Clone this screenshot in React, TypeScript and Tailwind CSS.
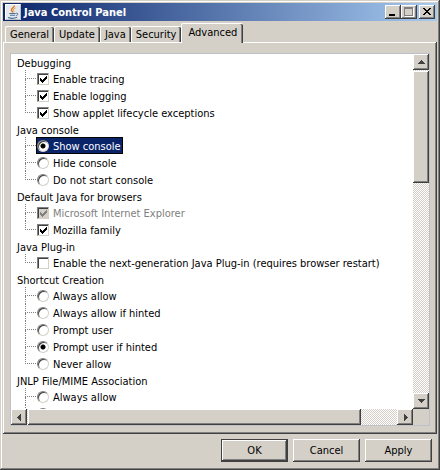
import type { ReactNode } from "react"
import clsx from "clsx"

type Item = {
  label: string
  checked?: boolean
  disabled?: boolean
  selected?: boolean
}

type Group = {
  title: string
  type: "checkbox" | "radio"
  items: Item[]
}

const tabs = ["General", "Update", "Java", "Security", "Advanced"]

const groups: Group[] = [
  {
    title: "Debugging",
    type: "checkbox",
    items: [
      { label: "Enable tracing", checked: true },
      { label: "Enable logging", checked: true },
      { label: "Show applet lifecycle exceptions", checked: true },
    ],
  },
  {
    title: "Java console",
    type: "radio",
    items: [
      { label: "Show console", checked: true, selected: true },
      { label: "Hide console" },
      { label: "Do not start console" },
    ],
  },
  {
    title: "Default Java for browsers",
    type: "checkbox",
    items: [
      { label: "Microsoft Internet Explorer", checked: true, disabled: true },
      { label: "Mozilla family", checked: true },
    ],
  },
  {
    title: "Java Plug-in",
    type: "checkbox",
    items: [{ label: "Enable the next-generation Java Plug-in (requires browser restart)" }],
  },
  {
    title: "Shortcut Creation",
    type: "radio",
    items: [
      { label: "Always allow" },
      { label: "Always allow if hinted" },
      { label: "Prompt user" },
      { label: "Prompt user if hinted", checked: true },
      { label: "Never allow" },
    ],
  },
  {
    title: "JNLP File/MIME Association",
    type: "radio",
    items: [{ label: "Always allow" }, { label: "" }],
  },
]

const bevel =
  "bg-[#d4d0c8] shadow-[inset_-1px_-1px_#404040,inset_1px_1px_#fff,inset_-2px_-2px_#808080]"
const track =
  "bg-[conic-gradient(#fff_25%,#d4d0c8_0_50%,#fff_0_75%,#d4d0c8_0)] bg-[length:2px_2px]"

const JavaIcon = () => (
  <svg viewBox="0 0 16 16" className="size-4" aria-hidden="true">
    <rect width="16" height="16" fill="#e4e8ec" />
    <path d="M.5 15.5V.5h15" fill="none" stroke="#fff" />
    <path d="M.5 15.5h15V.5" fill="none" stroke="#b9c3cf" />
    <path d="M9.3 1.5c.6 2-3.6 2.8-2.8 4.7.3.9 1.2 1.3 1 2.3" fill="none" stroke="#e2761b" strokeWidth="1.4" />
    <path d="M10.6 4c-2 .8-2.7 1.7-1.9 2.7.4.7.2 1.2-.4 1.7" fill="none" stroke="#e89a4c" />
    <path d="M4.3 9.5h6.4M5 11.3h5.2M3 13.5c2.5.9 7 .8 9.2-.2" fill="none" stroke="#4b7196" strokeWidth="1.1" />
    <path d="M11.2 9.3c2.4-.5 2.2 1.7 0 2.2" fill="none" stroke="#4b7196" />
  </svg>
)

const Caption = ({ label, children }: { label: string; children: ReactNode }) => (
  <button aria-label={label} className={clsx("w-4 h-[14px] grid place-items-center", bevel)}>
    <svg viewBox="0 0 12 10" className="w-3 h-[10px]" shapeRendering="crispEdges">
      {children}
    </svg>
  </button>
)

const TitleBar = () => (
  <header className="h-[18px] flex items-center px-0.5 bg-linear-to-r/srgb from-[#0a246a] to-[#a6caf0]">
    <JavaIcon />
    <h1 className="flex-1 pl-[3px] text-[11px] font-bold text-white">Java Control Panel</h1>
    <Caption label="Minimize">
      <path d="M2 7h6v2H2z" fill="#000" />
    </Caption>
    <Caption label="Maximize">
      <path d="M2 1h9v9H2z" fill="#fff" />
      <path d="M2 2h7v6H2z" fill="#d4d0c8" />
      <path d="M1 0h9v9H1zM2 2v6h7V2z" fill="#808080" fillRule="evenodd" />
    </Caption>
    <div className="w-0.5" />
    <Caption label="Close">
      <path
        d="M2 1h2v1h1v1h2V2h1V1h2v1H9v1H8v1H7v1h1v1h1v1h1v1H8V7H7V6H5v1H4v1H2V7h1V6h1V5h1V4H4V3H3V2H2z"
        fill="#000"
      />
    </Caption>
  </header>
)

const Tabs = () => (
  <div role="tablist" className="flex items-end pt-0.5 pl-0.5">
    {tabs.map((tab) => {
      const active = tab === "Advanced"
      return (
        <button
          key={tab}
          role="tab"
          aria-selected={active}
          className={clsx(
            "border-l border-t border-white rounded-t-[2px] bg-[#d4d0c8] shadow-[inset_-1px_0_#404040,inset_-2px_0_#808080]",
            active ? "relative -mb-px h-5 px-1.5 pb-0.5" : "h-4 pl-1 pr-[5px]"
          )}
        >
          {tab}
        </button>
      )
    })}
  </div>
)

const Control = ({ item, group }: { item: Item; group: Group }) => {
  if (group.type === "radio") {
    return (
      <input
        type="radio"
        name={group.title}
        defaultChecked={item.checked}
        aria-label={item.label || group.title}
        className="appearance-none size-3 rounded-full bg-white border border-[#808080] border-r-[#d4d0c8] border-b-[#d4d0c8] shadow-[inset_1px_1px_#404040] checked:bg-[radial-gradient(circle,#000_2px,#fff_3px)]"
      />
    )
  }
  return (
    <span className="grid place-items-center">
      <input
        type="checkbox"
        defaultChecked={item.checked}
        disabled={item.disabled}
        className="peer col-start-1 row-start-1 appearance-none size-3 bg-white disabled:bg-[#d4d0c8] border border-[#808080] border-r-[#d4d0c8] border-b-[#d4d0c8] shadow-[inset_1px_1px_#404040]"
      />
      <svg
        viewBox="0 0 8 8"
        shapeRendering="crispEdges"
        className="col-start-1 row-start-1 size-2 pointer-events-none invisible peer-checked:visible"
      >
        <path
          d="M1 3h1v1h1v1h1V4h1V3h1V2h1V1h1v3H7v1H6v1H5v1H4v1H3V7H2V6H1z"
          fill={item.disabled ? "#808080" : "#000"}
        />
      </svg>
    </span>
  )
}

const Row = ({ item, group, last }: { item: Item; group: Group; last: boolean }) => (
  <li className="flex h-[17px] pl-[14px]">
    <span className="w-[11px] shrink-0">
      <span className="block h-[9px] border-l border-b border-dotted border-[#808080]" />
      {!last && <span className="block h-2 border-l border-dotted border-[#808080]" />}
    </span>
    <label
      className={clsx(
        "flex items-center gap-1 border pr-px whitespace-nowrap",
        item.selected ? "bg-[#0a246a] border-black text-white" : "border-transparent",
        item.disabled && "text-[#808080]"
      )}
    >
      <Control item={item} group={group} />
      <span className="pt-0.5">{item.label}</span>
    </label>
  </li>
)

const arrows = {
  up: "M4 2h1v1h1v1h1v1h1v1H1V5h1V4h1V3h1z",
  down: "M1 2h7v1H7v1H6v1H5v1H4V5H3V4H2V3H1z",
  left: "M5 1h1v7H5V7H4V6H3V5H2V4h1V3h1V2h1z",
  right: "M3 1h1v1h1v1h1v1h1v1H6v1H5v1H4v1H3z",
}

const Arrow = ({ dir }: { dir: keyof typeof arrows }) => (
  <button aria-label={"Scroll " + dir} className={clsx("size-4 shrink-0 grid place-items-center", bevel)}>
    <svg viewBox="0 0 9 9" className="size-[9px]" shapeRendering="crispEdges">
      <path d={arrows[dir]} fill="#404040" />
    </svg>
  </button>
)

const SettingsList = () => (
  <div className="flex-1 min-h-0 grid grid-cols-[minmax(0,1fr)_16px] grid-rows-[minmax(0,1fr)_16px] border border-[#c0c0c8] bg-white">
    <div className="overflow-hidden">
      {groups.map((group) => (
        <section key={group.title}>
          <h2 className="h-4 pl-1.5 leading-5">{group.title}</h2>
          <ul>
            {group.items.map((item, i) => (
              <Row key={item.label} item={item} group={group} last={i === group.items.length - 1} />
            ))}
          </ul>
        </section>
      ))}
    </div>
    <div className={clsx("flex flex-col", track)}>
      <Arrow dir="up" />
      <div className="flex-1">
        <div className={clsx("mt-px h-28", bevel)} />
      </div>
      <Arrow dir="down" />
    </div>
    <div className={clsx("flex", track)}>
      <Arrow dir="left" />
      <div className="flex-1">
        <div className={clsx("ml-px h-4 w-[90%]", bevel)} />
      </div>
      <Arrow dir="right" />
    </div>
    <div className="bg-[#d4d0c8]" />
  </div>
)

export default function App() {
  return (
    <div className="h-dvh flex flex-col p-[3px] bg-[#d4d0c8] text-black text-[11px] leading-[15px] font-['DejaVu_Sans_Condensed','DejaVu_Sans',sans-serif] shadow-[inset_-1px_-1px_#404040,inset_1px_1px_#d4d0c8,inset_-2px_-2px_#808080,inset_2px_2px_#fff]">
      <TitleBar />
      <Tabs />
      <main
        role="tabpanel"
        className="flex-1 min-h-0 flex flex-col pt-[11px] px-[7px] pb-2 shadow-[inset_-1px_-1px_#404040,inset_1px_1px_#fff,inset_-2px_-2px_#808080]"
      >
        <SettingsList />
      </main>
      <footer className="flex justify-end gap-[5px] py-[5px] pr-[5px]">
        {["OK", "Cancel", "Apply"].map((name) => (
          <button
            key={name}
            className={clsx("w-[67px] h-[23px]", bevel, name === "OK" && "border border-[#404040]")}
          >
            {name}
          </button>
        ))}
      </footer>
    </div>
  )
}
